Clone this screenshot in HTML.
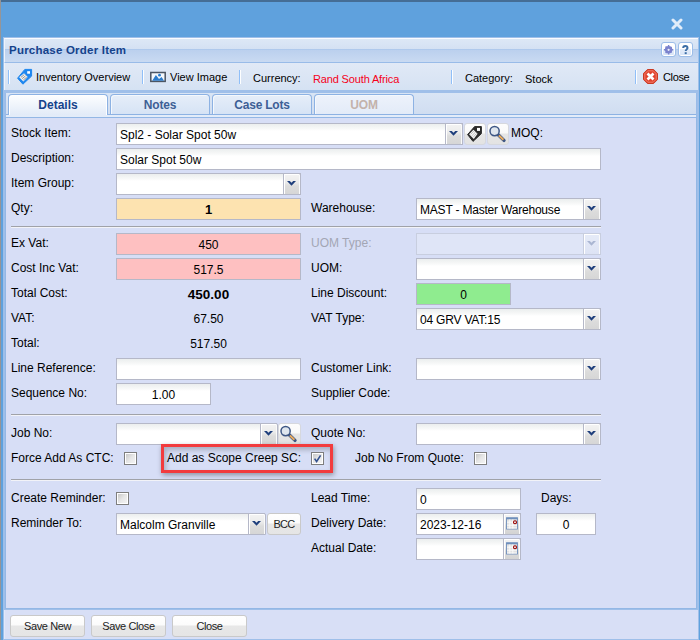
<!DOCTYPE html>
<html><head><meta charset="utf-8">
<style>
*{box-sizing:border-box;margin:0;padding:0}
html,body{width:700px;height:640px;overflow:hidden;background:#5fa1dd;font-family:"Liberation Sans",sans-serif;font-size:12px;color:#000}
.a{position:absolute}
#topbar{left:0;top:0;width:700px;height:2px;background:#456d95}
#leftbar{left:0;top:0;width:1px;height:640px;background:#969597}
#xclose{left:671px;top:18px;width:12px;height:12px}
#panel{left:3px;top:37px;width:696px;height:603px;background:#9fbfe9}
#hdr{left:4px;top:38px;width:694px;height:25px;border-top:1px solid #fafcff;border-left:1px solid #eef3fb;border-bottom:1px solid #99bbe8;background:linear-gradient(#dde8f6 0,#d4e1f3 10px,#afc9ec 10px,#afc9ec 11px,#bbd0ee 11px,#c9daf2 100%)}
#title{left:9px;top:42px;font-weight:bold;font-size:11.5px;letter-spacing:0.22px;color:#15428b;line-height:16px}
#tb{left:4px;top:63px;width:694px;height:27px;background:linear-gradient(#e1e9f6,#d5e2f3);border-left:1px solid #eef3fb}
.sep{width:2px;height:14px;background:linear-gradient(90deg,#90bff8 50%,#fdfeff 50%)}
.tbt{font-size:11px;line-height:14px;color:#000}
#strip{left:5px;top:93px;width:692px;height:25px;background:linear-gradient(#d9e5f5,#cfdcf0);border-left:1px solid #99bbe8;border-right:1px solid #99bbe8;border-bottom:1px solid #99bbe8}
#stripline{left:6px;top:114px;width:690px;height:1px;background:#8db2e3}
#stripbar{left:6px;top:115px;width:690px;height:2px;background:#e3ecf9}
.tab{top:94px;height:20px;width:100px;border:1px solid #8db2e3;box-shadow:inset 1px 1px 0 #f4f8fd;border-bottom:none;border-radius:4px 4px 0 0;background:linear-gradient(#e6eef9,#d6e3f5);font-weight:bold;font-size:12px;letter-spacing:-0.2px;color:#3d5f95;text-align:center;line-height:21px}
.tab.act{background:linear-gradient(#fdfeff,#e2ebf8);color:#15428b;letter-spacing:0;height:21px;z-index:2;box-shadow:inset 1px 1px 0 #fff,inset -1px 0 0 #fff}
.tab.dis{color:#c3b2ab;background:linear-gradient(#edf2fb,#e3ebf8)}
#body{left:5px;top:117px;width:692px;height:492px;background:#d7def6;border:1px solid #93b7e5;border-bottom-width:1px}
#foot{left:4px;top:610px;width:694px;height:29px;background:#d8dff6;border-left:1px solid #e2e8f9}
.lbl{font-size:12px;line-height:14px;white-space:nowrap}
.inp{height:22px;background:#fff;border:1px solid #b5b8c8;background:linear-gradient(#ebeeee 0,#f8f9f9 5px,#fff 7px,#fff 100%);font-size:12px;line-height:22px;padding-left:3px;white-space:nowrap}
.trig{width:18px;height:22px;border:1px solid #b5b8c8;border-top-right-radius:2px;background:linear-gradient(#f3f3f3 0,#ececec 40%,#dcdcdc 60%,#d6d6d6 100%);box-shadow:inset 1px 1px 0 #fff,inset -1px 0 0 #fafafa}
.hr{height:2px;border-top:1px solid #a0a2a8;border-bottom:1px solid #f2f3f8;left:11px;width:590px}
.cb{width:13px;height:13px;border:1px solid #7e7e7e;box-shadow:inset 0 0 0 1px #fff;background:linear-gradient(135deg,#c2c2c2 0,#e6e6e6 50%,#f6f6f6 100%)}
.btn{height:22px;border:1px solid #c9c9c9;border-radius:3px;background:linear-gradient(#fff 0,#fbfbfb 45%,#e7e7e7 50%,#e5e5e5 100%);font-size:12px;line-height:21px;text-align:center;color:#222}
.qty{background:#fde3b0;font-weight:bold;font-size:13px}
.pink{background:#fec0c1;font-size:12px}
.green{background:#8fec8f}
.disab{background:#dfe5f7;border-color:#c8cedf}
.trig.dis{background:linear-gradient(#e6ebf8,#dde3f4);border-color:#c8cedf}
.num{font-size:12px;line-height:18px;text-align:center}
.num.b{font-weight:bold;font-size:13.5px;line-height:19px}
.ibtn{width:22px;height:22px;border:1px solid #d6d8de;border-radius:3px;background:linear-gradient(#fdfdfd 0,#f9f9f9 47%,#e6e6e6 48%,#e3e3e3 100%)}
.dtrig{width:18px;height:22px;border:1px solid #b5b8c8;border-top-right-radius:2px;background:linear-gradient(#f3f3f3 0,#ececec 40%,#dcdcdc 60%,#d3d3d3 100%);box-shadow:inset 1px 1px 0 #fff,inset -1px 0 0 #fafafa}
.fb{font-size:11px;letter-spacing:-0.4px}
#redbox{left:161px;top:444px;width:172px;height:29px;border:3px solid #f23b3d;box-shadow:1px 2px 5px rgba(0,0,0,.35), inset 2px 3px 5px rgba(0,0,0,.22)}
.hbtn{width:15px;height:15px;border:1px solid #9cbde8;border-radius:3px;background:linear-gradient(#fff 0,#fff 45%,#e3ecf9 50%,#d6e4f7 100%);box-shadow:inset 0 0 0 1px #fff}
</style></head><body>
<div class="a" id="topbar"></div>
<div class="a" id="leftbar"></div>
<svg class="a" id="xclose" viewBox="0 0 12 12"><path d="M2 2L10 10M10 2L2 10" stroke="#e2edf9" stroke-width="3" stroke-linecap="round"/></svg>
<div class="a" id="panel"></div>
<div class="a" id="hdr"></div>
<div class="a" id="title">Purchase Order Item</div>

<div class="a" id="tb"></div>
<div class="a sep" style="left:8px;top:70px"></div>
<div class="a tbt" style="left:36px;top:70px">Inventory Overview</div>
<div class="a sep" style="left:142px;top:70px"></div>
<div class="a tbt" style="left:170px;top:70px">View Image</div>
<div class="a sep" style="left:239px;top:70px"></div>
<div class="a tbt" style="left:253px;top:71px">Currency:</div>
<div class="a tbt" style="left:313px;top:72px;color:#f5001a;letter-spacing:-0.15px">Rand South Africa</div>
<div class="a sep" style="left:451px;top:70px"></div>
<div class="a tbt" style="left:465px;top:71px">Category:</div>
<div class="a tbt" style="left:525px;top:72px">Stock</div>
<div class="a sep" style="left:635px;top:70px"></div>
<div class="a tbt" style="left:663px;top:70px;letter-spacing:-0.35px">Close</div>


<svg class="a" style="left:16px;top:68px" width="18" height="18" viewBox="0 0 18 18">
<path d="M8.8 1.4H15.6V8.1L6.9 16.2L1.6 10.2Z" fill="#1f87ef" stroke="#1f87ef" stroke-width="1" stroke-linejoin="round"/>
<rect x="11.2" y="3.2" width="2.8" height="2.5" fill="#fff"/>
<path d="M3.2 9.3L8 5.2L11.7 9L7.4 13.6Z" fill="#f4f4f4"/>
<path d="M4.9 9.4L8.3 6.6M6.1 10.7L9.5 7.9M7.3 12L10.7 9.2" stroke="#8a8a8a" stroke-width="0.9"/>
</svg>
<svg class="a" style="left:150px;top:71px" width="16" height="12" viewBox="0 0 16 12">
<rect x="0.8" y="1.5" width="14.4" height="8.9" fill="#f4f8fc" stroke="#4b5563" stroke-width="1.5"/>
<path d="M2.2 9.7L5.9 4.1L9 8L11.6 6.1L14 9.7Z" fill="#2b7bcb"/>
<circle cx="9.5" cy="4.2" r="1.4" fill="#2b7bcb"/>
</svg>
<svg class="a" style="left:643px;top:69px" width="15" height="15" viewBox="0 0 15 15">
<path d="M4.4 0.5H10.6L14.5 4.4V10.6L10.6 14.5H4.4L0.5 10.6V4.4Z" fill="#e2432d" stroke="#c93a24" stroke-width="1"/>
<path d="M4.8 1.8H10.2L13.2 4.8V10.2L10.2 13.2H4.8L1.8 10.2V4.8Z" fill="none" stroke="#f08a78" stroke-width="0.8"/>
<path d="M4.5 4.5L10.5 10.5M10.5 4.5L4.5 10.5" stroke="#fff" stroke-width="2.7"/>
</svg>
<div class="a hbtn" style="left:661px;top:42px"><svg width="13" height="13" viewBox="0 0 13 13" style="position:absolute;left:0;top:0">
<g fill="#7b82cd"><circle cx="6.6" cy="6.8" r="3.7"/>
<path d="M5.9 2h1.4v1.6h-1.4zM5.9 10h1.4v1.6h-1.4zM2 6.1v1.4h1.6v-1.4zM9.6 6.1v1.4h1.6v-1.4z"/>
<path d="M3.1 4.1l1-1 1.1 1.1-1 1zM8 9l1-1 1.1 1.1-1 1zM3.1 9.5l1 1 1.1-1.1-1-1zM8 4.6l1 1 1.1-1.1-1-1z"/></g>
<circle cx="6.6" cy="6.8" r="1.1" fill="#f0f2fa"/></svg></div>
<div class="a hbtn" style="left:678px;top:42px"><svg width="13" height="13" viewBox="0 0 13 13" style="position:absolute;left:0;top:0">
<path d="M4.2 5.1C4.2 3.6 5.1 3 6.3 3C7.6 3 8.5 3.7 8.5 4.9C8.5 6.3 6.7 6.5 6.7 8.1" fill="none" stroke="#3c6ea6" stroke-width="2"/>
<rect x="5.7" y="9.2" width="2" height="1.9" fill="#3c6ea6"/></svg></div>
<div class="a" id="strip"></div>
<div class="a" id="stripline"></div>
<div class="a" id="stripbar"></div>
<div class="a tab act" style="left:8px">Details</div>
<div class="a tab" style="left:110px">Notes</div>
<div class="a tab" style="left:212px">Case Lots</div>
<div class="a tab dis" style="left:314px">UOM</div>

<div class="a" id="body"></div>
<div class="a" id="foot"></div>
<!--BODY-->
<div class="a lbl" style="left:11px;top:126px;">Stock Item:</div>
<div class="a inp " style="left:116px;top:123px;width:347px;text-align:left;">Spl2 - Solar Spot 50w</div>
<div class="a trig" style="left:445px;top:123px"><svg width="15" height="20" viewBox="0 0 15 20"><path d="M3 6.9H5.8L7.5 8.7L9.2 6.9H12L7.5 11.7Z" fill="#1f3f7c"/></svg></div>
<div class="a ibtn" style="left:464px;top:123px" id="tagbtn"><svg width="20" height="20" viewBox="0 0 20 20" style="position:absolute;left:0;top:0">
<path d="M9.6 2.6H16.4V9.6L8 17.4L2.6 10.6Z" fill="#2b2b2b" stroke="#2b2b2b" stroke-width="1" stroke-linejoin="round"/>
<rect x="12" y="3.9" width="3" height="3" fill="#fff"/>
<path d="M4.1 10.2L8.4 5.8L12.6 9.8L8.8 14.9Z" fill="#f7f7f7"/>
<path d="M5.6 10.4L9.1 6.8M6.9 11.8L10.4 8.1M8.2 13.2L11.6 9.4" stroke="#a8a8a8" stroke-width="0.7"/>
</svg></div>
<div class="a ibtn" style="left:487px;top:123px" id="srchbtn"><svg width="20" height="20" viewBox="0 0 20 20" style="position:absolute;left:0;top:0">
<path d="M10.2 10.8L16 16.4" stroke="#3e5785" stroke-width="3.4" stroke-linecap="round"/>
<path d="M10.9 11.5L15.4 15.8" stroke="#e9aa5c" stroke-width="2" stroke-linecap="butt"/>
<circle cx="6.6" cy="7.1" r="4.6" fill="#dfe6ee" stroke="#3e5785" stroke-width="1.5"/>
</svg></div>
<div class="a lbl" style="left:511px;top:126px;">MOQ:</div>
<div class="a lbl" style="left:11px;top:151px;">Description:</div>
<div class="a inp " style="left:116px;top:148px;width:485px;text-align:left;">Solar Spot 50w</div>
<div class="a lbl" style="left:11px;top:176px;">Item Group:</div>
<div class="a inp " style="left:116px;top:173px;width:185px;text-align:left;"></div>
<div class="a trig" style="left:283px;top:173px"><svg width="15" height="20" viewBox="0 0 15 20"><path d="M3 6.9H5.8L7.5 8.7L9.2 6.9H12L7.5 11.7Z" fill="#1f3f7c"/></svg></div>
<div class="a lbl" style="left:11px;top:201px;">Qty:</div>
<div class="a inp qty" style="left:116px;top:198px;width:185px;text-align:center;padding-left:0;">1</div>
<div class="a lbl" style="left:311px;top:201px;">Warehouse:</div>
<div class="a inp " style="left:416px;top:198px;width:185px;text-align:left;letter-spacing:-0.2px">MAST - Master Warehouse</div>
<div class="a trig" style="left:583px;top:198px"><svg width="15" height="20" viewBox="0 0 15 20"><path d="M3 6.9H5.8L7.5 8.7L9.2 6.9H12L7.5 11.7Z" fill="#1f3f7c"/></svg></div>
<div class="a hr" style="top:226px"></div>
<div class="a lbl" style="left:11px;top:236px;">Ex Vat:</div>
<div class="a inp pink" style="left:116px;top:233px;width:185px;text-align:center;padding-left:0;">450</div>
<div class="a lbl" style="left:311px;top:236px;color:#a3a6b4">UOM Type:</div>
<div class="a inp disab" style="left:416px;top:233px;width:185px;text-align:left;"></div>
<div class="a trig dis" style="left:583px;top:233px"><svg width="15" height="20" viewBox="0 0 15 20"><path d="M3 6.9H5.8L7.5 8.7L9.2 6.9H12L7.5 11.7Z" fill="#aab6d2"/></svg></div>
<div class="a lbl" style="left:11px;top:261px;">Cost Inc Vat:</div>
<div class="a inp pink" style="left:116px;top:258px;width:185px;text-align:center;padding-left:0;">517.5</div>
<div class="a lbl" style="left:311px;top:261px;">UOM:</div>
<div class="a inp " style="left:416px;top:258px;width:185px;text-align:left;"></div>
<div class="a trig" style="left:583px;top:258px"><svg width="15" height="20" viewBox="0 0 15 20"><path d="M3 6.9H5.8L7.5 8.7L9.2 6.9H12L7.5 11.7Z" fill="#1f3f7c"/></svg></div>
<div class="a lbl" style="left:11px;top:286px;">Total Cost:</div>
<div class="a num b" style="left:116px;top:285px;width:185px">450.00</div>
<div class="a lbl" style="left:311px;top:286px;">Line Discount:</div>
<div class="a inp green" style="left:416px;top:283px;width:95px;text-align:center;padding-left:0;">0</div>
<div class="a lbl" style="left:11px;top:311px;">VAT:</div>
<div class="a num" style="left:116px;top:310px;width:185px">67.50</div>
<div class="a lbl" style="left:311px;top:311px;">VAT Type:</div>
<div class="a inp " style="left:416px;top:308px;width:185px;text-align:left;letter-spacing:-0.2px">04 GRV VAT:15</div>
<div class="a trig" style="left:583px;top:308px"><svg width="15" height="20" viewBox="0 0 15 20"><path d="M3 6.9H5.8L7.5 8.7L9.2 6.9H12L7.5 11.7Z" fill="#1f3f7c"/></svg></div>
<div class="a lbl" style="left:11px;top:336px;">Total:</div>
<div class="a num" style="left:116px;top:335px;width:185px">517.50</div>
<div class="a lbl" style="left:11px;top:361px;">Line Reference:</div>
<div class="a inp " style="left:116px;top:358px;width:185px;text-align:left;"></div>
<div class="a lbl" style="left:311px;top:361px;">Customer Link:</div>
<div class="a inp " style="left:416px;top:358px;width:185px;text-align:left;"></div>
<div class="a trig" style="left:583px;top:358px"><svg width="15" height="20" viewBox="0 0 15 20"><path d="M3 6.9H5.8L7.5 8.7L9.2 6.9H12L7.5 11.7Z" fill="#1f3f7c"/></svg></div>
<div class="a lbl" style="left:11px;top:386px;">Sequence No:</div>
<div class="a inp " style="left:116px;top:383px;width:95px;text-align:center;padding-left:0;">1.00</div>
<div class="a lbl" style="left:311px;top:386px;">Supplier Code:</div>
<div class="a hr" style="top:414px"></div>
<div class="a lbl" style="left:11px;top:426px;">Job No:</div>
<div class="a inp " style="left:116px;top:423px;width:161px;text-align:left;"></div>
<div class="a trig" style="left:260px;top:423px"><svg width="15" height="20" viewBox="0 0 15 20"><path d="M3 6.9H5.8L7.5 8.7L9.2 6.9H12L7.5 11.7Z" fill="#1f3f7c"/></svg></div>
<div class="a ibtn" style="left:278px;top:423px;width:23px" id="srchbtn2"><svg width="20" height="20" viewBox="0 0 20 20" style="position:absolute;left:0;top:0">
<path d="M10.2 10.8L16 16.4" stroke="#3e5785" stroke-width="3.4" stroke-linecap="round"/>
<path d="M10.9 11.5L15.4 15.8" stroke="#e9aa5c" stroke-width="2" stroke-linecap="butt"/>
<circle cx="6.6" cy="7.1" r="4.6" fill="#dfe6ee" stroke="#3e5785" stroke-width="1.5"/>
</svg></div>
<div class="a lbl" style="left:311px;top:426px;">Quote No:</div>
<div class="a inp " style="left:416px;top:423px;width:185px;text-align:left;"></div>
<div class="a trig" style="left:583px;top:423px"><svg width="15" height="20" viewBox="0 0 15 20"><path d="M3 6.9H5.8L7.5 8.7L9.2 6.9H12L7.5 11.7Z" fill="#1f3f7c"/></svg></div>
<div class="a lbl" style="left:11px;top:451px;">Force Add As CTC:</div>
<div class="a cb" style="left:124px;top:452px"></div>
<div class="a" id="redbox"></div>
<div class="a lbl" style="left:167px;top:451px;">Add as Scope Creep SC:</div>
<div class="a cb" style="left:311px;top:452px"><svg width="11" height="11" viewBox="0 0 11 11" style="position:absolute;left:0;top:0"><path d="M2.6 5.6L4.6 8.5L8.6 2.4" fill="none" stroke="#34528f" stroke-width="1.6"/></svg></div>
<div class="a lbl" style="left:355px;top:451px;">Job No From Quote:</div>
<div class="a cb" style="left:474px;top:452px"></div>
<div class="a hr" style="top:479px"></div>
<div class="a lbl" style="left:11px;top:491px;">Create Reminder:</div>
<div class="a cb" style="left:116px;top:492px"></div>
<div class="a lbl" style="left:311px;top:491px;">Lead Time:</div>
<div class="a inp " style="left:416px;top:488px;width:105px;text-align:left;">0</div>
<div class="a lbl" style="left:541px;top:491px;">Days:</div>
<div class="a lbl" style="left:11px;top:516px;">Reminder To:</div>
<div class="a inp " style="left:116px;top:513px;width:149px;text-align:left;">Malcolm Granville</div>
<div class="a trig" style="left:248px;top:513px"><svg width="15" height="20" viewBox="0 0 15 20"><path d="M3 6.9H5.8L7.5 8.7L9.2 6.9H12L7.5 11.7Z" fill="#1f3f7c"/></svg></div>
<div class="a btn" style="left:267px;top:513px;width:34px;font-size:11px;letter-spacing:-0.8px">BCC</div>
<div class="a lbl" style="left:311px;top:516px;">Delivery Date:</div>
<div class="a inp " style="left:416px;top:513px;width:105px;text-align:left;">2023-12-16</div>
<div class="a dtrig" style="left:503px;top:513px"><svg width="16" height="20" viewBox="0 0 16 20" style="position:absolute;left:0;top:0">
<rect x="2.5" y="4" width="11" height="11" fill="#e2e2e2" stroke="#6f8fbc" stroke-width="0.9"/>
<rect x="2.2" y="3.4" width="11.6" height="1.9" fill="#6f8fbc"/>
<path d="M3 8.2H13M3 11.2H13M3 14H13M5.8 5.5V14.5M8.8 5.5V14.5" stroke="#fbfbfb" stroke-width="1"/>
<circle cx="11" cy="8.2" r="1.5" fill="none" stroke="#990000" stroke-width="1.1"/>
</svg></div>
<div class="a inp " style="left:536px;top:513px;width:60px;text-align:center;padding-left:0;">0</div>
<div class="a lbl" style="left:311px;top:541px;">Actual Date:</div>
<div class="a inp " style="left:416px;top:538px;width:105px;text-align:left;"></div>
<div class="a dtrig" style="left:503px;top:538px"><svg width="16" height="20" viewBox="0 0 16 20" style="position:absolute;left:0;top:0">
<rect x="2.5" y="4" width="11" height="11" fill="#e2e2e2" stroke="#6f8fbc" stroke-width="0.9"/>
<rect x="2.2" y="3.4" width="11.6" height="1.9" fill="#6f8fbc"/>
<path d="M3 8.2H13M3 11.2H13M3 14H13M5.8 5.5V14.5M8.8 5.5V14.5" stroke="#fbfbfb" stroke-width="1"/>
<circle cx="11" cy="8.2" r="1.5" fill="none" stroke="#990000" stroke-width="1.1"/>
</svg></div>
<div class="a btn fb" style="left:10px;top:615px;width:75px">Save New</div>
<div class="a btn fb" style="left:91px;top:615px;width:75px">Save Close</div>
<div class="a btn fb" style="left:172px;top:615px;width:75px">Close</div>
<!--/BODY-->

</body></html>
